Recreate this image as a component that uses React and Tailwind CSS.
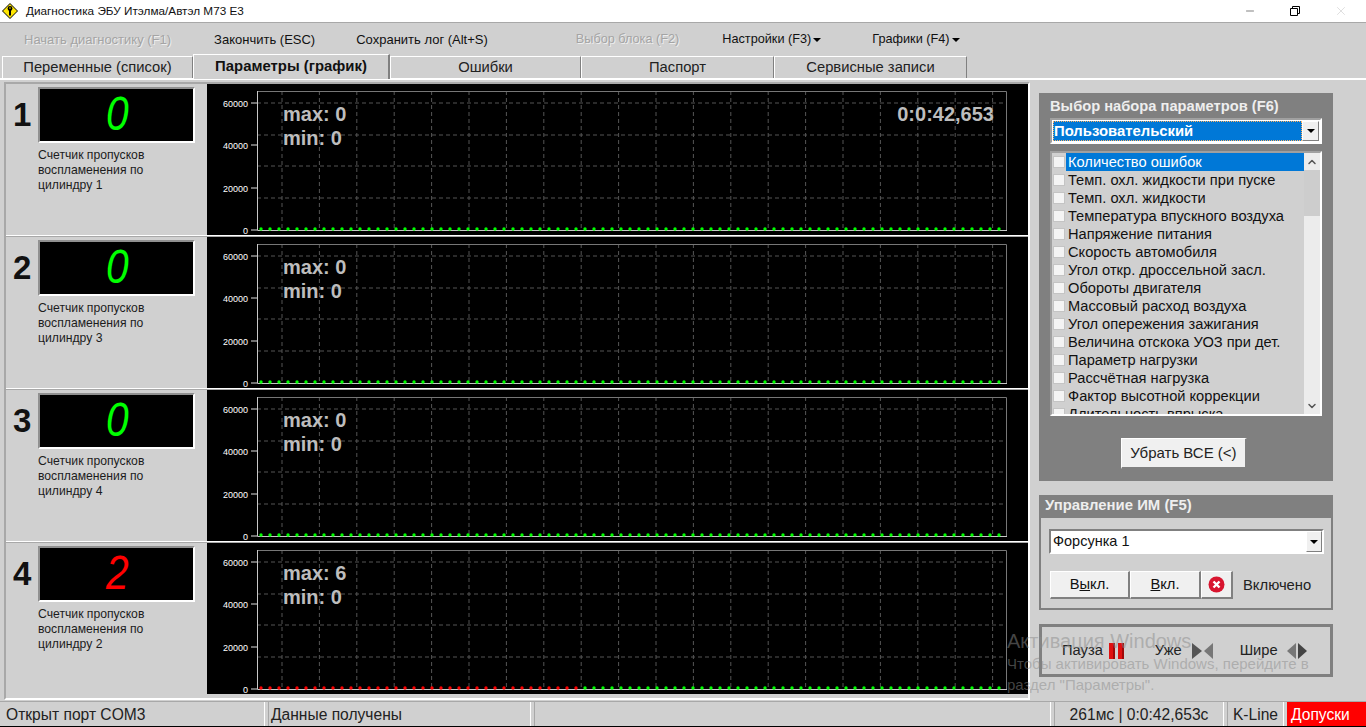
import { Fragment } from "react";
import { ChevronUp, ChevronDown, Minus, X } from "lucide-react";

const params = [
  "Количество ошибок",
  "Темп. охл. жидкости при пуске",
  "Темп. охл. жидкости",
  "Температура впускного воздуха",
  "Напряжение питания",
  "Скорость автомобиля",
  "Угол откр. дроссельной засл.",
  "Обороты двигателя",
  "Массовый расход воздуха",
  "Угол опережения зажигания",
  "Величина отскока УОЗ при дет.",
  "Параметр нагрузки",
  "Рассчётная нагрузка",
  "Фактор высотной коррекции",
  "Длительность впрыска",
];

const rows = [
  { n: 1, cyl: 1, value: "0", max: 0, time: "0:0:42,653" },
  { n: 2, cyl: 3, value: "0", max: 0 },
  { n: 3, cyl: 4, value: "0", max: 0 },
  { n: 4, cyl: 2, value: "2", max: 6, red: true },
];

const tabs = [
  { name: "Переменные (список)", w: "w-[191px]" },
  { name: "Параметры (график)", w: "w-[197px]", active: true },
  { name: "Ошибки", w: "w-[191px]" },
  { name: "Паспорт", w: "w-[193px]" },
  { name: "Сервисные записи", w: "w-[193px]" },
];

const xs = Array.from({ length: 20 }, (_, i) => 75 + i * 37.4);
const dots = Array.from({ length: 83 }, (_, i) => 54 + i * 9);

const Chart = ({ max, red, time }) => (
  <svg width="821" height="151" className="block shrink-0 bg-black">
    {/* grid */}
    {[19, 51, 82, 114].map((y) => (
      <line key={y} x1="50" x2="800" y1={y} y2={y} stroke="#555" strokeDasharray="4 3" />
    ))}
    {xs.map((x) => (
      <line key={x} x1={x} x2={x} y1="7" y2="147" stroke="#555" strokeDasharray="4 3" />
    ))}
    {/* frame */}
    <path d="M50.5 7.5H799.5V146.5" fill="none" stroke="#777" />
    <path d="M50.5 7V146.5H800" fill="none" stroke="#c8c8c8" />
    {[
      [19, "60000"],
      [61, "40000"],
      [104, "20000"],
      [146, "0"],
    ].map(([y, t]) => (
      <g key={t}>
        <line x1="44" x2="50" y1={y} y2={y} stroke="#ddd" />
        <text x="41" y={y + 3.5} textAnchor="end" fill="#fff" fontSize="9" fontFamily="Liberation Sans">
          {t}
        </text>
      </g>
    ))}
    {dots.map((x) => (
      <circle key={x} cx={x} cy="145" r="1.7" fill={red && x < 375 ? "#ff0000" : "#00ff00"} />
    ))}
    <g fill="#bdbdbd" fontSize="20" fontWeight="700" fontFamily="Liberation Sans">
      <text x="76" y="37">max: {max}</text>
      <text x="76" y="61">min: 0</text>
      {time && (
        <text x="787" y="37" textAnchor="end">
          {time}
        </text>
      )}
    </g>
  </svg>
);

const Row = ({ n, cyl, value, max, red, time }) => (
  <div className="flex h-[151px] shrink-0">
    <div className="flex w-[201px] shrink-0">
      <div className="w-[32px] pl-[7px] pt-[13px] text-[33px] font-bold leading-[36px] text-[#111]">{n}</div>
      <div className="w-[159px] pt-[3px]">
        <div className="flex h-[56px] w-[157px] items-center justify-center border-2 border-t-[#909090] border-l-[#909090] border-r-white border-b-white bg-black pb-[3px] pl-[2px]">
          <span
            className={`inline-block scale-x-[0.85] text-[48px] italic leading-none ${red ? "text-[#ff0000]" : "text-[#00ff00]"}`}
          >
            {value}
          </span>
        </div>
        <div className="mt-[5px] w-[125px] text-[12.2px] leading-[15px] text-[#1c1c1c]">
          <div>Счетчик пропусков</div>
          <div>воспламенения по</div>
          <div>цилиндру {cyl}</div>
        </div>
      </div>
    </div>
    <Chart max={max} red={red} time={time} />
  </div>
);

const ComboArrow = ({ className }) => (
  <div
    className={`flex items-center justify-center border border-b-[#808080] border-r-[#808080] border-t-white border-l-white bg-[#f0f0f0] ${className}`}
  >
    <div className="h-0 w-0 border-x-[4px] border-t-[4px] border-x-transparent border-t-black" />
  </div>
);

const Logo = () => (
  <svg width="16" height="16" viewBox="0 0 16 16" className="shrink-0">
    <path d="M8 .5 15.5 8 8 15.5.5 8Z" fill="#ffe600" stroke="#000" />
    <circle cx="8" cy="5.5" r="2.4" fill="#000" />
    <path d="M7 6.5h2v6H7z" fill="#000" />
    <circle cx="8" cy="5" r=".8" fill="#ffe600" />
  </svg>
);

export default function App() {
  return (
    <div className="relative flex h-[727px] w-[1366px] flex-col overflow-hidden bg-[#d0d0d0] font-[Liberation_Sans,sans-serif]">
      {/* title bar */}
      <div className="flex h-[23px] shrink-0 items-center border-b border-[#a8a8a8] bg-white pb-[1px] pl-[2px]">
        <Logo />
        <span className="ml-[8px] text-[11.75px] text-[#111]">Диагностика ЭБУ Итэлма/Автэл М73 Е3</span>
        <div className="ml-auto flex items-center text-black">
          <Minus size={12} strokeWidth={1} />
          <svg width="10" height="10" viewBox="0 0 10 10" className="ml-[34px]" fill="none" stroke="#000">
            <path d="M.5 2.5h7v7h-7zM2.5 2.5v-2h7v7h-2" />
          </svg>
          <X size={14} strokeWidth={1} className="ml-[34px] mr-[18px] text-[#c8c8c8]" />
        </div>
      </div>

      {/* toolbar */}
      <div className="flex h-[31px] shrink-0 items-center pt-[3px] text-[13px] text-[#111]">
        <span className="ml-[24px] text-[#a4a4a4] [text-shadow:1px_1px_0_#eee]">Начать диагностику (F1)</span>
        <span className="ml-[43px]">Закончить (ESC)</span>
        <span className="ml-[41px]">Сохранить лог (Alt+S)</span>
        <span className="ml-[88px] text-[12.7px] text-[#a4a4a4] [text-shadow:1px_1px_0_#eee]">Выбор блока (F2)</span>
        <span className="ml-[43px] flex items-center gap-[2px] text-[12.7px]">
          Настройки (F3)
          <span className="h-0 w-0 border-x-[4px] border-t-[4px] border-x-transparent border-t-black" />
        </span>
        <span className="ml-[51px] flex items-center gap-[2px] text-[12.7px]">
          Графики (F4)
          <span className="h-0 w-0 border-x-[4px] border-t-[4px] border-x-transparent border-t-black" />
        </span>
      </div>

      {/* tabs */}
      <div className="flex h-[24px] shrink-0 items-end pl-[2px]">
        {tabs.map((t) =>
          t.active ? (
            <div
              key={t.name}
              className={`${t.w} z-10 mb-[-1px] flex h-[25px] items-start justify-center border-l border-r-2 border-t border-l-white border-r-[#808080] border-t-white bg-[#d0d0d0] text-[14.9px] font-bold text-[#111]`}
            >
              {t.name}
            </div>
          ) : (
            <div
              key={t.name}
              className={`${t.w} flex h-[22px] items-center justify-center border-l border-r border-t border-l-white border-r-[#808080] border-t-white pb-[1px] text-[14.75px] text-[#222]`}
            >
              {t.name}
            </div>
          ),
        )}
      </div>

      {/* main */}
      <div className="flex h-[623px] shrink-0 border-t-2 border-white">
        <div className="ml-[4px] mt-[2px] flex h-[618px] w-[1026px] shrink-0 flex-col border-2 border-b-white border-l-[#a8a8a8] border-r-white border-t-[#a8a8a8]">
          {rows.map((r, i) => (
            <Fragment key={r.n}>
              {i > 0 && <div className="h-[2px] shrink-0 border-t border-white bg-[#a8a8a8]" />}
              <Row {...r} />
            </Fragment>
          ))}
        </div>

        {/* right column */}
        <div className="ml-[9px] flex w-[294px] shrink-0 flex-col pt-[13px]">
          <div className="h-[388px] bg-[#808080] px-[11px] pt-[5px]">
            <div className="text-[14.7px] font-bold leading-[16px] text-[#eee]">Выбор набора параметров (F6)</div>
            <div className="mt-[4px] flex h-[26px] w-[272px] border-2 border-b-white border-l-[#a0a0a0] border-r-white border-t-[#a0a0a0] bg-white p-px">
              <div className="flex-1 border border-dotted border-[#ffb060] bg-[#0078d7] text-[14.85px] font-bold leading-[19px] text-white">
                Пользовательский
              </div>
              <ComboArrow className="w-[17px]" />
            </div>
            <div className="mt-[7px] flex h-[265px] w-[272px] overflow-hidden border-2 border-b-white border-l-[#a0a0a0] border-r-white border-t-[#a0a0a0] bg-[#d0d0d0]">
              <div className="w-[252px] shrink-0">
                {params.map((p, i) => (
                  <div key={p} className="flex h-[18px] items-center">
                    <div className="ml-[1px] h-[12px] w-[12px] shrink-0 border border-[#c4c4c4] bg-[#f4f4f4]" />
                    <div
                      className={`ml-[1px] h-[18px] flex-1 pl-[2px] text-[14.65px] leading-[18px] ${i === 0 ? "bg-[#0078d7] text-white" : "text-[#111]"}`}
                    >
                      {p}
                    </div>
                  </div>
                ))}
              </div>
              <div className="flex w-[16px] flex-col bg-[#ececec]">
                <div className="flex h-[17px] items-center justify-center">
                  <ChevronUp size={12} strokeWidth={3} className="text-[#555]" />
                </div>
                <div className="h-[46px] bg-[#cdcdcd]" />
                <div className="mt-auto flex h-[17px] items-center justify-center">
                  <ChevronDown size={12} strokeWidth={3} className="text-[#555]" />
                </div>
              </div>
            </div>
            <div className="ml-[71px] mt-[22px] flex h-[31px] w-[126px] items-center justify-center border border-b-2 border-r-2 border-b-[#808080] border-l-white border-r-[#808080] border-t-white bg-[#f0f0f0] text-[15px] text-[#222]">
              Убрать ВСЕ (&lt;)
            </div>
          </div>

          <div className="mt-[14px] h-[115px] border-2 border-[#808080]">
            <div className="h-[21px] bg-[#808080] pl-[4px] text-[14.9px] font-bold leading-[17px] text-[#eee]">
              Управление ИМ (F5)
            </div>
            <div className="ml-[8px] mt-[11px] flex h-[25px] w-[275px] border-2 border-b-white border-l-[#808080] border-r-white border-t-[#808080] bg-white">
              <div className="flex-1 pl-[2px] text-[14.5px] leading-[21px] text-[#111]">Форсунка 1</div>
              <ComboArrow className="w-[16px]" />
            </div>
            <div className="ml-[9px] mt-[17px] flex items-center">
              <div className="flex h-[28px] w-[80px] items-center justify-center border border-b-2 border-r-2 border-b-[#808080] border-l-white border-r-[#808080] border-t-white bg-[#f0f0f0] text-[14.7px] text-[#111]">
                В<u>ы</u>кл.
              </div>
              <div className="flex h-[28px] w-[71px] items-center justify-center border border-b-2 border-r-2 border-b-[#808080] border-l-white border-r-[#808080] border-t-white bg-[#f0f0f0] text-[14.7px] text-[#111]">
                <u>В</u>кл.
              </div>
              <div className="flex h-[28px] w-[32px] items-center justify-center border border-b-2 border-r-2 border-b-[#808080] border-l-white border-r-[#808080] border-t-white bg-[#f0f0f0]">
                <svg width="17" height="17" viewBox="0 0 17 17">
                  <circle cx="8.5" cy="8.5" r="8" fill="#d8152f" />
                  <path d="m5.5 5.5 6 6m0-6-6 6" stroke="#fff" strokeWidth="2.4" />
                </svg>
              </div>
              <span className="ml-[10px] text-[14.8px] text-[#222]">Включено</span>
            </div>
          </div>

          <div className="mt-[14px] flex h-[53px] items-center border-[3px] border-[#808080] text-[14.7px] text-[#222]">
            <span className="ml-[20px]">Пауза</span>
            <svg width="16" height="16" viewBox="0 0 16 16" className="ml-[6px]">
              <rect x="0" y="0" width="6" height="16" fill="#e01010" />
              <rect x="9" y="0" width="6" height="16" fill="#e01010" />
              <rect x="4" y="0" width="2" height="16" fill="#a00808" />
              <rect x="13" y="0" width="2" height="16" fill="#a00808" />
            </svg>
            <span className="ml-[30px]">Уже</span>
            <svg width="22" height="16" viewBox="0 0 22 16" className="ml-[10px]">
              <path d="M0 0v16L10 8Z" fill="#555" />
              <path d="M21 0v16L12 8Z" fill="#777" />
            </svg>
            <span className="ml-[26px]">Шире</span>
            <svg width="22" height="16" viewBox="0 0 22 16" className="ml-[8px]">
              <path d="M10 0v16L1 8Z" fill="#777" />
              <path d="M12 0v16L21 8Z" fill="#444" />
            </svg>
          </div>
        </div>
      </div>

      {/* status bar */}
      <div className="flex h-[27px] shrink-0 gap-[3px] border-b-2 border-t border-b-black border-t-[#a8a8a8] text-[15.6px] leading-[25px] text-[#222]">
        <div className="w-[265px] border-r border-white pl-[6px]">Открыт порт COM3</div>
        <div className="w-[263px] border-x border-x-white border-l-[#a8a8a8] pl-[2px]">Данные получены</div>
        <div className="w-[517px] border-x border-x-white border-l-[#a8a8a8]" />
        <div className="w-[170px] border-x border-x-white border-l-[#a8a8a8] text-center">261мс | 0:0:42,653с</div>
        <div className="w-[57px] border-x border-x-white border-l-[#a8a8a8] text-center">K-Line</div>
        <div className="flex-1 bg-[#ff0000] pl-[4px] text-white">Допуски</div>
      </div>

      {/* windows activation watermark */}
      <div className="pointer-events-none absolute left-[1007px] top-[629px] text-[#8a8a8a]/50">
        <div className="text-[20px] leading-[24px]">Активация Windows</div>
        <div className="text-[15px] leading-[21px]">Чтобы активировать Windows, перейдите в</div>
        <div className="text-[15px] leading-[21px]">раздел "Параметры".</div>
      </div>
    </div>
  );
}
